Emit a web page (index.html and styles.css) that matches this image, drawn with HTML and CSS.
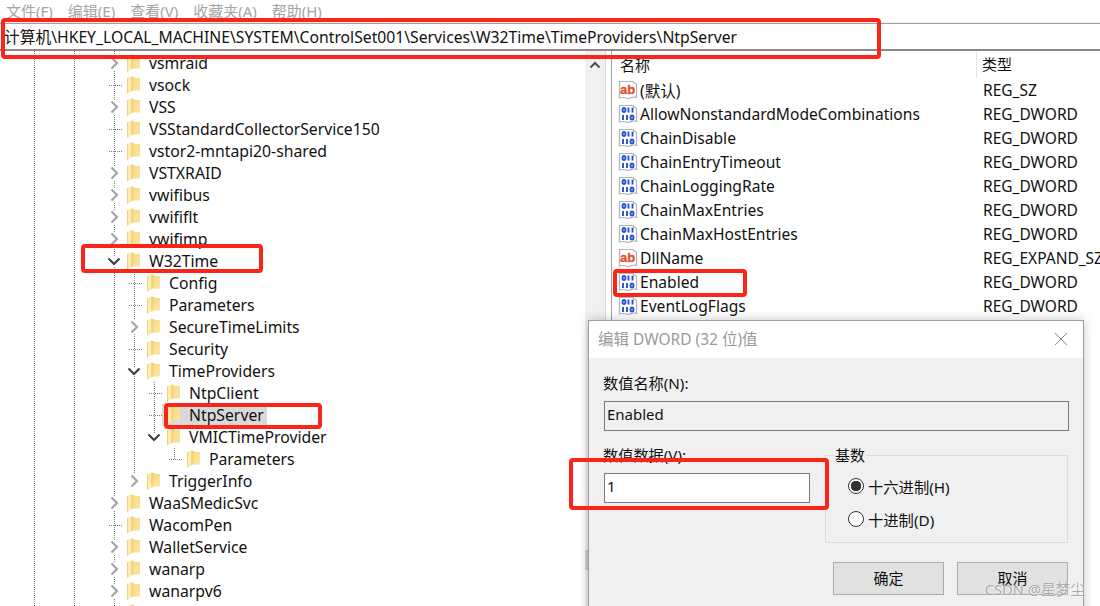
FILE: index.html
```html
<!DOCTYPE html>
<html lang="zh-CN">
<head>
<meta charset="utf-8">
<title>注册表编辑器</title>
<link rel="stylesheet" href="styles.css">
</head>
<body>
<svg class="defs" width="0" height="0" aria-hidden="true">
  <defs>
    <linearGradient id="fy" x1="0" y1="0" x2="1" y2="1">
      <stop offset="0" stop-color="#f8d77e"/><stop offset="1" stop-color="#fbe6a2"/>
    </linearGradient>
    <symbol id="folder" viewBox="0 0 13 18">
      <path d="M3 1 H7 L8 2 H13 V14.500 H3 Z" fill="url(#fy)"/>
      <path d="M0 2 L5 .5 V15 L0 18 Z" fill="#fcecb0"/>
      <path d="M5 .5 V15" stroke="#f0c25a" stroke-width="1"/>
      <path d="M.4 2 V17.600" stroke="#ecc86c" stroke-width=".8"/>
    </symbol>
    <symbol id="chev" viewBox="0 0 9 14">
      <path d="M1.500 1.500 L7 7 L1.500 12.500" fill="none" stroke="#a6a6a6" stroke-width="2.200"/>
    </symbol>
    <symbol id="open" viewBox="0 0 14 9">
      <path d="M1.500 1.500 L7 7 L12.500 1.500" fill="none" stroke="#404040" stroke-width="2.200"/>
    </symbol>
    <symbol id="sheet" viewBox="0 0 20 20">
      <path d="M1.500 1.500 H15 L18.500 4.500 V17.500 C15 15.500 12 19.500 8 18 C5.500 17 3.500 17.500 1.500 18 Z" fill="#fff" stroke="#b4b4b4" stroke-width="1.200"/>
    </symbol>
    <symbol id="dword" viewBox="0 0 20 20">
      <use href="#sheet" width="20" height="20"/>
      <g fill="none" stroke="#2650d2" stroke-width="1.900">
        <ellipse cx="6" cy="6" rx="1.500" ry="2"/>
        <path d="M10.500 3.500 V8.500 M14.500 3.500 V8.500"/>
        <path d="M5 11 V16 M9 11 V16"/>
        <ellipse cx="14" cy="13.500" rx="1.500" ry="2"/>
      </g>
    </symbol>
    <symbol id="absz" viewBox="0 0 20 20">
      <use href="#sheet" width="20" height="20"/>
      <text x="9.500" y="14" text-anchor="middle" class="abtext">ab</text>
    </symbol>
  </defs>
</svg>

<div class="window">
  <nav class="menu">
    <span>文件(F)</span><span>编辑(E)</span><span>查看(V)</span><span>收藏夹(A)</span><span>帮助(H)</span>
  </nav>
  <div class="address">计算机\HKEY_LOCAL_MACHINE\SYSTEM\ControlSet001\Services\W32Time\TimeProviders\NtpServer</div>
  <main class="panes">
    <section class="tree">
      <i class="guide g34"></i><i class="guide g74"></i><i class="guide g114"></i>
      <i class="guide g134"></i><i class="guide g154"></i><i class="guide g174"></i>
      <div class="node l1"><span class="slot"><svg class="chev"><use href="#chev"/></svg></span><svg class="folder"><use href="#folder"/></svg><span class="name">vsmraid</span></div>
      <div class="node l1"><span class="slot tick"></span><svg class="folder"><use href="#folder"/></svg><span class="name">vsock</span></div>
      <div class="node l1"><span class="slot"><svg class="chev"><use href="#chev"/></svg></span><svg class="folder"><use href="#folder"/></svg><span class="name">VSS</span></div>
      <div class="node l1"><span class="slot tick"></span><svg class="folder"><use href="#folder"/></svg><span class="name">VSStandardCollectorService150</span></div>
      <div class="node l1"><span class="slot tick"></span><svg class="folder"><use href="#folder"/></svg><span class="name">vstor2-mntapi20-shared</span></div>
      <div class="node l1"><span class="slot"><svg class="chev"><use href="#chev"/></svg></span><svg class="folder"><use href="#folder"/></svg><span class="name">VSTXRAID</span></div>
      <div class="node l1"><span class="slot"><svg class="chev"><use href="#chev"/></svg></span><svg class="folder"><use href="#folder"/></svg><span class="name">vwifibus</span></div>
      <div class="node l1"><span class="slot"><svg class="chev"><use href="#chev"/></svg></span><svg class="folder"><use href="#folder"/></svg><span class="name">vwififlt</span></div>
      <div class="node l1"><span class="slot"><svg class="chev"><use href="#chev"/></svg></span><svg class="folder"><use href="#folder"/></svg><span class="name">vwifimp</span></div>
      <div class="node l1"><span class="slot"><svg class="open"><use href="#open"/></svg></span><svg class="folder"><use href="#folder"/></svg><span class="name">W32Time</span></div>
      <div class="node l2"><span class="slot tick"></span><svg class="folder"><use href="#folder"/></svg><span class="name">Config</span></div>
      <div class="node l2"><span class="slot tick"></span><svg class="folder"><use href="#folder"/></svg><span class="name">Parameters</span></div>
      <div class="node l2"><span class="slot"><svg class="chev"><use href="#chev"/></svg></span><svg class="folder"><use href="#folder"/></svg><span class="name">SecureTimeLimits</span></div>
      <div class="node l2"><span class="slot tick"></span><svg class="folder"><use href="#folder"/></svg><span class="name">Security</span></div>
      <div class="node l2"><span class="slot"><svg class="open"><use href="#open"/></svg></span><svg class="folder"><use href="#folder"/></svg><span class="name">TimeProviders</span></div>
      <div class="node l3"><span class="slot tick"></span><svg class="folder"><use href="#folder"/></svg><span class="name">NtpClient</span></div>
      <div class="node l3 selected"><span class="slot tick"></span><span class="hilite"><svg class="folder"><use href="#folder"/></svg><span class="name">NtpServer</span></span></div>
      <div class="node l3"><span class="slot"><svg class="open"><use href="#open"/></svg></span><svg class="folder"><use href="#folder"/></svg><span class="name">VMICTimeProvider</span></div>
      <div class="node l4"><span class="slot tick"></span><svg class="folder"><use href="#folder"/></svg><span class="name">Parameters</span></div>
      <div class="node l2"><span class="slot"><svg class="chev"><use href="#chev"/></svg></span><svg class="folder"><use href="#folder"/></svg><span class="name">TriggerInfo</span></div>
      <div class="node l1"><span class="slot"><svg class="chev"><use href="#chev"/></svg></span><svg class="folder"><use href="#folder"/></svg><span class="name">WaaSMedicSvc</span></div>
      <div class="node l1"><span class="slot tick"></span><svg class="folder"><use href="#folder"/></svg><span class="name">WacomPen</span></div>
      <div class="node l1"><span class="slot"><svg class="chev"><use href="#chev"/></svg></span><svg class="folder"><use href="#folder"/></svg><span class="name">WalletService</span></div>
      <div class="node l1"><span class="slot"><svg class="chev"><use href="#chev"/></svg></span><svg class="folder"><use href="#folder"/></svg><span class="name">wanarp</span></div>
      <div class="node l1"><span class="slot"><svg class="chev"><use href="#chev"/></svg></span><svg class="folder"><use href="#folder"/></svg><span class="name">wanarpv6</span></div>
      <div class="node l1 lastrow"><span class="slot"></span><svg class="folder"><use href="#folder"/></svg></div>
    </section>
    <div class="scrollbar">
      <svg class="scroll-up" width="12" height="8" viewBox="0 0 12 8"><path d="M1.500 6.500 L6 2 L10.500 6.500" fill="none" stroke="#505050" stroke-width="2"/></svg>
      <span class="thumb"></span>
    </div>
    <section class="values">
      <div class="head"><span class="col-name">名称</span><span class="col-type">类型</span></div>
      <div class="value"><span class="cell-name"><svg class="vicon"><use href="#absz"/></svg>(默认)</span><span class="cell-type">REG_SZ</span></div>
      <div class="value"><span class="cell-name"><svg class="vicon"><use href="#dword"/></svg>AllowNonstandardModeCombinations</span><span class="cell-type">REG_DWORD</span></div>
      <div class="value"><span class="cell-name"><svg class="vicon"><use href="#dword"/></svg>ChainDisable</span><span class="cell-type">REG_DWORD</span></div>
      <div class="value"><span class="cell-name"><svg class="vicon"><use href="#dword"/></svg>ChainEntryTimeout</span><span class="cell-type">REG_DWORD</span></div>
      <div class="value"><span class="cell-name"><svg class="vicon"><use href="#dword"/></svg>ChainLoggingRate</span><span class="cell-type">REG_DWORD</span></div>
      <div class="value"><span class="cell-name"><svg class="vicon"><use href="#dword"/></svg>ChainMaxEntries</span><span class="cell-type">REG_DWORD</span></div>
      <div class="value"><span class="cell-name"><svg class="vicon"><use href="#dword"/></svg>ChainMaxHostEntries</span><span class="cell-type">REG_DWORD</span></div>
      <div class="value"><span class="cell-name"><svg class="vicon"><use href="#absz"/></svg>DllName</span><span class="cell-type">REG_EXPAND_SZ</span></div>
      <div class="value"><span class="cell-name"><svg class="vicon"><use href="#dword"/></svg>Enabled</span><span class="cell-type">REG_DWORD</span></div>
      <div class="value"><span class="cell-name"><svg class="vicon"><use href="#dword"/></svg>EventLogFlags</span><span class="cell-type">REG_DWORD</span></div>
      <div class="value"><span class="cell-name"><svg class="vicon"><use href="#dword"/></svg></span></div>
    </section>
  </main>
</div>

<div class="dialog">
  <header class="dlg-title">
    <span>编辑 DWORD (32 位)值</span>
    <svg class="dlg-close" width="14" height="14" viewBox="0 0 14 14"><path d="M1 1 L13 13 M13 1 L1 13" stroke="#8c8c8c" stroke-width="1" fill="none"/></svg>
  </header>
  <div class="dlg-body">
    <label class="dlg-label">数值名称(N):</label>
    <div class="field field-name">Enabled</div>
    <div class="dlg-row">
      <div class="dlg-data">
        <label class="dlg-label">数值数据(V):</label>
        <div class="field field-data">1</div>
      </div>
      <fieldset class="base">
        <legend>基数</legend>
        <div class="radio on"><span class="dot"></span>十六进制(H)</div>
        <div class="radio"><span class="dot"></span>十进制(D)</div>
      </fieldset>
    </div>
    <div class="dlg-actions">
      <button class="btn" type="button">确定</button>
      <button class="btn" type="button">取消</button>
    </div>
  </div>
</div>

<i class="mark m-address"></i>
<i class="mark m-w32"></i>
<i class="mark m-ntp"></i>
<i class="mark m-enabled"></i>
<i class="mark m-data"></i>
<div class="watermark">CSDN @星梦尘</div>
</body>
</html>
```

FILE: styles.css
```css
* { box-sizing: border-box; }
html, body { margin: 0; padding: 0; }
body {
  width: 1100px;
  height: 606px;
  overflow: hidden;
  position: relative;
  background: #fff;
  color: #111;
  font-family: "Noto Sans", "Noto Sans CJK SC", sans-serif;
  font-size: 15px;
}
.defs { position: absolute; }
.abtext { font: 700 13px "Liberation Sans", sans-serif; fill: #e2502f; stroke: #e2502f; stroke-width: .3px; }

.window { display: flex; flex-direction: column; height: 606px; }

.menu {
  height: 23px;
  flex: none;
  display: flex;
  gap: 15px;
  padding-left: 6px;
  font-size: 15px;
  line-height: 22px;
  color: #a4a4a4;
  background: #fff;
}

.address {
  height: 28px;
  flex: none;
  padding-left: 4px;
  border-top: 1px solid #a0a0a0;
  border-bottom: 2px solid #8a8a8a;
  box-shadow: 0 -1px 0 #efefef;
  font-size: 15.720px;
  line-height: 26px;
  white-space: nowrap;
  overflow: hidden;
}

.panes { flex: 1; display: flex; min-height: 0; }

.tree {
  position: relative;
  width: 585px;
  flex: none;
  padding-top: 1px;
  overflow: hidden;
  font-size: 15.750px;
}
.guide {
  position: absolute;
  width: 1px;
  background-image: linear-gradient(#808080 50%, transparent 50%);
  background-size: 1px 2px;
}
.g34  { left: 34px;  top: 0; bottom: 0; }
.g74  { left: 74px;  top: 0; bottom: 0; }
.g114 { left: 114px; top: 0; bottom: 0; }
.g134 { left: 134px; top: 221px; height: 210px; }
.g154 { left: 154px; top: 331px; height: 55px; }
.g174 { left: 174px; top: 397px; height: 11px; }

.node {
  position: relative;
  height: 22px;
  display: flex;
  align-items: center;
  white-space: nowrap;
}
.l1 { padding-left: 108px; }
.l2 { padding-left: 128px; }
.l3 { padding-left: 148px; }
.l4 { padding-left: 168px; }

.slot {
  width: 19px;
  height: 22px;
  flex: none;
  display: flex;
  align-items: center;
}
.tick {
  background-image: linear-gradient(90deg, #808080 50%, transparent 50%);
  background-size: 2px 1px;
  background-repeat: repeat-x;
  background-position: 7px 11px;
  background-clip: content-box;
  padding-right: 4px;
}
.chev { width: 9px; height: 14px; margin-left: 2px; background: #fff; }
.open { width: 14px; height: 9px; margin-left: -1px; background: #fff; }
.folder { width: 13px; height: 18px; flex: none; margin-right: 9px; }
.name { line-height: 22px; }
.selected .hilite {
  display: flex;
  align-items: center;
  height: 22px;
  margin-left: -5px;
  padding-left: 5px;
  padding-right: 3px;
  background: #d9d9d9;
}

.scrollbar {
  position: relative;
  width: 21px;
  flex: none;
  background: #f0f0f0;
  border-right: 1px solid #d8d8d8;
}
.scroll-up { position: absolute; left: 4px; top: 10px; }
.thumb {
  position: absolute;
  left: 0;
  top: 499px;
  width: 100%;
  height: 20px;
  background: #cdcdcd;
}

.values {
  flex: 1;
  margin-left: 5px;
  border-left: 1px solid #a0a0a0;
  overflow: hidden;
  min-width: 0;
  font-size: 15.600px;
}
.head {
  height: 27px;
  display: flex;
  align-items: center;
  padding-left: 8px;
  font-size: 15px;
}
.col-name { width: 357px; align-self: stretch; line-height: 29px; border-right: 1px solid #e5e5e5; }
.col-type { padding-left: 5px; line-height: 29px; }

.value { height: 24px; display: flex; align-items: center; white-space: nowrap; padding-left: 6px; }
.cell-name { width: 365px; flex: none; display: flex; align-items: center; }
.vicon { width: 20px; height: 20px; flex: none; margin-right: 2px; }
.cell-type { font-size: 15.500px; }

.dialog {
  position: absolute;
  left: 588px;
  top: 320px;
  width: 496px;
  height: 300px;
  background: #f0f0f0;
  border: 1px solid #9c9c9c;
  box-shadow: 0 0 10px rgba(0, 0, 0, .22);
}
.dlg-title {
  height: 37px;
  background: #fff;
  display: flex;
  align-items: center;
  justify-content: space-between;
  padding: 0 15px 2px 9px;
  color: #9a9a9a;
  font-size: 15.500px;
}
.dlg-body { padding: 15px 14px 0 15px; }
.dlg-label { display: block; height: 20px; line-height: 20px; font-size: 15.200px; margin-left: -1px; }
.field { border: 1px solid #7a7a7a; height: 30px; line-height: 25px; padding-left: 2px; }
.field-name { margin-top: 8px; }
.dlg-row { display: flex; gap: 15px; margin-top: 14px; }
.dlg-data { width: 206px; flex: none; }
.field-data { margin-top: 8px; background: #fff; }

.base {
  width: 243px;
  height: 98px;
  margin: 0;
  padding: 4px 0 0 22px;
  border: 1px solid #dcdcdc;
  font-size: 15.300px;
  flex: none;
}
.base legend { margin-left: -14px; padding: 0 1px; line-height: 20px; height: 20px; font-size: 15px; }
.radio { display: flex; align-items: center; height: 33px; gap: 4px; }
.dot {
  width: 16px;
  height: 16px;
  flex: none;
  border: 1px solid #333;
  border-radius: 50%;
  background: #fff;
  display: block;
}
.on .dot { background: radial-gradient(circle, #333 5px, #fff 5.500px); }

.dlg-actions { display: flex; justify-content: flex-end; gap: 13px; margin-top: 19px; margin-right: 1px; }
.btn {
  width: 111px;
  height: 33px;
  background: #e1e1e1;
  border: 1px solid #adadad;
  font: 15px "Noto Sans", "Noto Sans CJK SC", sans-serif;
  color: #111;
  padding: 0 0 2px;
}

.mark {
  position: absolute;
  border: 4px solid #fa2418;
  border-radius: 4px;
}
.m-address { left: 1px; top: 18px; width: 880px; height: 41px; }
.m-w32 { left: 81px; top: 244px; width: 182px; height: 29px; }
.m-ntp { left: 164px; top: 403px; width: 158px; height: 26px; }
.m-enabled { left: 613px; top: 269px; width: 134px; height: 28px; }
.m-data { left: 569px; top: 458px; width: 260px; height: 52px; }

.watermark {
  position: absolute;
  right: 15px;
  top: 579px;
  font-size: 14.700px;
  line-height: 20px;
  color: rgba(150, 150, 150, .8);
  text-shadow: 0 0 2px #fff;
}
```
